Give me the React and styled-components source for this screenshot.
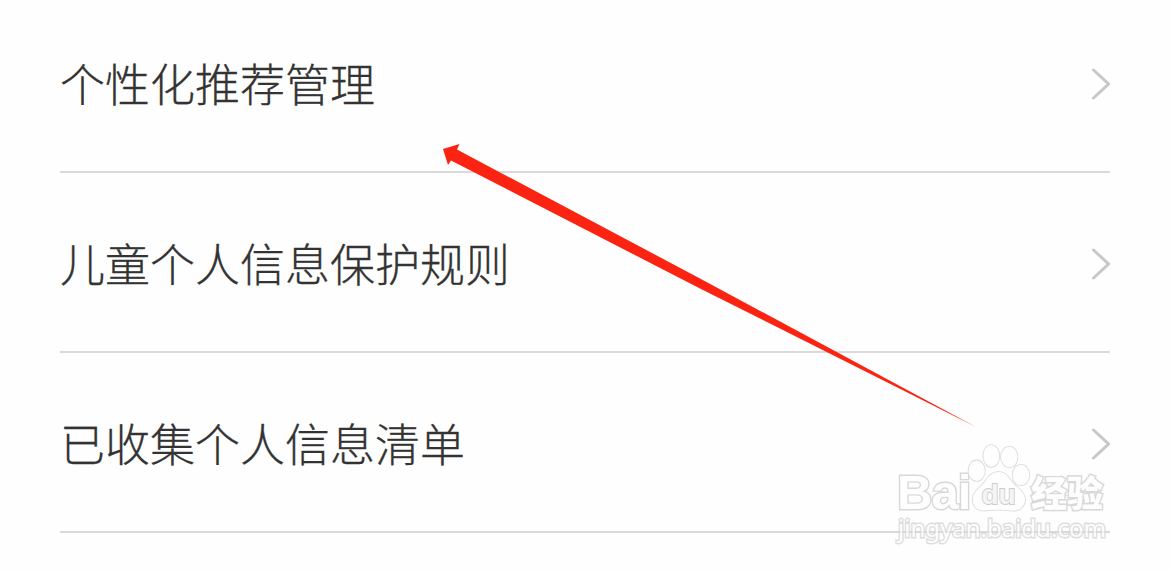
import React from "react";
import styled, { createGlobalStyle } from "styled-components";

const items = ["个性化推荐管理", "儿童个人信息保护规则", "已收集个人信息清单"];

const App = () => {
	return (
		<Page>
			<GlobalStyle />
			<List>
				{items.map((label) => (
					<Item key={label}>
						<Label>{label}</Label>
						<Chevron viewBox="0 0 20 32">
							<path d="M3.5 2 L18.5 16 L3.5 30" />
						</Chevron>
					</Item>
				))}
			</List>
			<Pointer viewBox="0 0 1170 570">
				<path d="M443 149 L459.5 144 L457 149.5 L700 278.5 L976 427 L700 288.5 L451 160.5 L448 165 Z" />
			</Pointer>
			<Watermark>
				<Brand>
					<Bai>Bai</Bai>
					<Paw viewBox="0 0 64 74">
						<ellipse cx="9.7" cy="30.7" rx="8.2" ry="10.3" />
						<ellipse cx="24.3" cy="16" rx="8" ry="11" />
						<ellipse cx="42.3" cy="17" rx="8.3" ry="10.3" />
						<ellipse cx="54" cy="35" rx="8.3" ry="10.3" />
						<path d="M31 32 C22 32 20 41 13 47 C7 52 5 57 6 62 C7 69 12 71 19 70.5 C27 69.5 36 69.5 43 70.5 C51 71.5 57 68 58 61 C59 55 54 50 49 46 C42 40 41 32 31 32 Z" />
						<text x="14.5" y="64">du</text>
					</Paw>
					<Jingyan>经验</Jingyan>
				</Brand>
				<Site>jingyan.baidu.com</Site>
			</Watermark>
		</Page>
	);
};

const GlobalStyle = createGlobalStyle`
	body {
		margin: 0;
		background-color: #fefefe;
	}
`;
const Page = styled.div`
	position: relative;
	box-sizing: border-box;
	width: 1170px;
	height: 570px;
	padding: 0 60px;
	overflow: hidden;
	background-color: #fefefe;
`;
const List = styled.div`
	display: flex;
	flex-direction: column;
	margin-top: -7px;
`;
const Item = styled.div`
	display: flex;
	align-items: center;
	justify-content: space-between;
	box-sizing: border-box;
	height: 180px;
	padding-top: 4px;
	border-bottom: 2px solid #dadada;
`;
const Label = styled.span`
	padding-bottom: 2px;
	font-family: "Noto Sans CJK SC", sans-serif;
	font-size: 45px;
	font-weight: 300;
	line-height: 60px;
	color: #333;
	-webkit-text-stroke: 0.3px #333;
`;
const Chevron = styled.svg`
	width: 20px;
	height: 32px;
	fill: none;
	stroke: #c8c8c8;
	stroke-width: 3;
	stroke-linecap: round;
`;
const Pointer = styled.svg`
	position: absolute;
	top: 0;
	left: 0;
	width: 1170px;
	height: 570px;
	fill: #fb2412;
`;
const Watermark = styled.div`
	position: absolute;
	top: 440px;
	left: 896px;
	display: flex;
	flex-direction: column;
	width: 214px;
	color: #fff;
	-webkit-text-stroke: 2.8px #d4d4d4;
	paint-order: stroke fill;
	opacity: 0.9;
`;
const Brand = styled.div`
	display: flex;
	align-items: flex-start;
	height: 74px;
`;
const Bai = styled.span`
	width: 70px;
	padding-left: 1px;
	margin-top: 31px;
	font-family: "Liberation Sans", sans-serif;
	font-size: 49px;
	font-weight: 700;
	letter-spacing: -1px;
	line-height: 42px;
`;
const Paw = styled.svg`
	width: 64px;
	height: 74px;
	overflow: visible;
	fill: #fff;
	stroke: #d4d4d4;
	stroke-width: 1.6;

	text {
		font: 700 28px "Liberation Sans", sans-serif;
		fill: #f4f4f4;
		stroke: #c8c8c8;
		-webkit-text-stroke: 0;
		stroke-width: 1.8;
	}
`;
const Jingyan = styled.span`
	margin-top: 31px;
	font-family: "Noto Sans CJK SC", sans-serif;
	font-size: 36px;
	font-weight: 900;
	line-height: 40px;
`;
const Site = styled.span`
	padding-left: 2px;
	font-family: "Noto Sans", sans-serif;
	font-size: 24px;
	line-height: 28px;
	opacity: 0.85;
`;
export default App;
